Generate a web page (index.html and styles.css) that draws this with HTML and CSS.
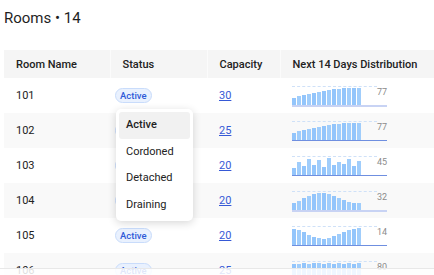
FILE: index.html
```html
<!doctype html>
<html lang="en">
	<head>
		<meta charset="UTF-8" />
		<title>Rooms</title>
		<link rel="stylesheet" href="styles.css">
	</head>
	<body>
		<h1 class="title">Rooms • 14</h1>

		<div class="table-wrap">
			<table class="rooms">
				<colgroup>
					<col class="c-name">
					<col class="c-status">
					<col class="c-cap">
					<col class="c-dist">
				</colgroup>
				<thead>
					<tr>
						<th>Room Name</th>
						<th>Status</th>
						<th>Capacity</th>
						<th>Next 14 Days Distribution</th>
					</tr>
				</thead>
				<tbody>
					<tr>
						<td>101</td>
						<td><span class="badge">Active</span></td>
						<td><a class="cap" href="#">30</a></td>
						<td>
							<div class="spark faint">
								<div class="bars">
									<i style="height:7px"></i><i style="height:9px"></i><i style="height:10px"></i><i style="height:11px"></i><i style="height:12px"></i><i style="height:13px"></i><i style="height:14px"></i><i style="height:15px"></i><i style="height:16px"></i><i style="height:16px"></i><i style="height:17px"></i><i style="height:17px"></i><i style="height:17px"></i><i style="height:17px"></i>
								</div>
								<span class="peak">77</span>
							</div>
						</td>
					</tr>
					<tr>
						<td>102</td>
						<td><span class="badge">Active</span></td>
						<td><a class="cap" href="#">25</a></td>
						<td>
							<div class="spark">
								<div class="bars">
									<i style="height:7px"></i><i style="height:9px"></i><i style="height:10px"></i><i style="height:11px"></i><i style="height:12px"></i><i style="height:13px"></i><i style="height:14px"></i><i style="height:15px"></i><i style="height:16px"></i><i style="height:16px"></i><i style="height:17px"></i><i style="height:17px"></i><i style="height:17px"></i><i style="height:17px"></i>
								</div>
								<span class="peak">77</span>
							</div>
						</td>
					</tr>
					<tr>
						<td>103</td>
						<td><span class="badge">Active</span></td>
						<td><a class="cap" href="#">20</a></td>
						<td>
							<div class="spark">
								<div class="bars">
									<i style="height:7px"></i><i style="height:13px"></i><i style="height:9px"></i><i style="height:16px"></i><i style="height:10px"></i><i style="height:15px"></i><i style="height:8px"></i><i style="height:17px"></i><i style="height:10px"></i><i style="height:13px"></i><i style="height:11px"></i><i style="height:16px"></i><i style="height:9px"></i><i style="height:14px"></i>
								</div>
								<span class="peak">45</span>
							</div>
						</td>
					</tr>
					<tr>
						<td>104</td>
						<td><span class="badge">Active</span></td>
						<td><a class="cap" href="#">20</a></td>
						<td>
							<div class="spark faint">
								<div class="bars">
									<i style="height:7px"></i><i style="height:9px"></i><i style="height:12px"></i><i style="height:14px"></i><i style="height:16px"></i><i style="height:17px"></i><i style="height:17px"></i><i style="height:16px"></i><i style="height:14px"></i><i style="height:12px"></i><i style="height:10px"></i><i style="height:8px"></i><i style="height:7px"></i><i style="height:7px"></i>
								</div>
								<span class="peak">32</span>
							</div>
						</td>
					</tr>
					<tr>
						<td>105</td>
						<td><span class="badge">Active</span></td>
						<td><a class="cap" href="#">20</a></td>
						<td>
							<div class="spark">
								<div class="bars">
									<i style="height:16px"></i><i style="height:15px"></i><i style="height:13px"></i><i style="height:10px"></i><i style="height:8px"></i><i style="height:7px"></i><i style="height:6px"></i><i style="height:7px"></i><i style="height:9px"></i><i style="height:11px"></i><i style="height:13px"></i><i style="height:15px"></i><i style="height:16px"></i><i style="height:17px"></i>
								</div>
								<span class="peak">14</span>
							</div>
						</td>
					</tr>
					<tr>
						<td>106</td>
						<td><span class="badge">Active</span></td>
						<td><a class="cap" href="#">25</a></td>
						<td>
							<div class="spark">
								<div class="bars">
									<i style="height:16px"></i><i style="height:16px"></i><i style="height:17px"></i><i style="height:16px"></i><i style="height:17px"></i><i style="height:17px"></i><i style="height:16px"></i><i style="height:17px"></i><i style="height:16px"></i><i style="height:17px"></i><i style="height:16px"></i><i style="height:17px"></i><i style="height:16px"></i><i style="height:17px"></i>
								</div>
								<span class="peak">80</span>
							</div>
						</td>
					</tr>
				</tbody>
			</table>

			<ul class="menu">
				<li class="selected">Active</li>
				<li>Cordoned</li>
				<li>Detached</li>
				<li>Draining</li>
			</ul>
		</div>

		<div class="footer"></div>
	</body>
</html>
```

FILE: styles.css
```css
body {
	font-family: Roboto, "Liberation Sans", sans-serif;
	margin: 0;
	padding: 0 0 0 4px;
	color: #222;
	background: #fff;
	overflow: hidden;
	height: 275px;
}

.title {
	font-size: 15px;
	font-weight: 400;
	margin: 0;
	padding-top: 9px;
	height: 50px;
	box-sizing: border-box;
	color: #1f1f1f;
}

.table-wrap {
	position: relative;
	width: 440px;
}

.rooms {
	border-collapse: collapse;
	table-layout: fixed;
	width: 440px;
	font-size: 11px;
}

.c-name { width: 106px; }
.c-status { width: 97px; }
.c-cap { width: 73px; }
.c-dist { width: 164px; }

.rooms th {
	background: #f5f5f5;
	font-weight: 500;
	text-align: left;
	height: 28px;
	padding: 0 0 0 12px;
	border-left: 1px solid #fbfbfb;
	color: #222;
	white-space: nowrap;
}

.rooms th:first-child {
	border-left: none;
}

.rooms td {
	height: 35px;
	padding: 0 0 0 12px;
	vertical-align: middle;
}

.rooms tbody tr:nth-child(even) td {
	background: #f9f9f9;
}

.badge {
	display: inline-block;
	font-size: 9.5px;
	font-weight: 500;
	color: #2f5bd8;
	background: #e9f1fe;
	border: 1px solid #c9dcfb;
	border-radius: 8px;
	padding: 1px 4px;
	line-height: 11px;
	margin-left: -7px;
}

.cap {
	color: #3659d6;
	text-decoration: underline;
}

.spark {
	display: flex;
	align-items: flex-start;
	width: 95px;
	height: 19px;
	border-bottom: 1px solid #6f8fe0;
	margin-top: 1px;
}

.spark.faint {
	border-bottom: 2px solid #c8d3f4;
}

.bars {
	display: flex;
	align-items: flex-end;
	gap: 1px;
	width: 85px;
	height: 18px;
	border-top: 1px dashed #cfe1f8;
}

.bars i {
	display: block;
	flex: 0 0 4px;
	background: #93c5fb;
}

.bars i:nth-child(even) {
	background: #a0cdfb;
}

.peak {
	font-size: 9px;
	color: #8c8c8c;
	margin-top: 1px;
	width: 10px;
	text-align: right;
}

.menu {
	position: absolute;
	left: 112px;
	top: 59px;
	width: 77px;
	margin: 0;
	padding: 3px;
	list-style: none;
	background: #fff;
	border-radius: 5px;
	box-shadow: 0 2px 8px rgba(0, 0, 0, 0.16);
	font-size: 11px;
	box-sizing: border-box;
}

.menu li {
	height: 26.5px;
	line-height: 26.5px;
	padding-left: 7px;
	border-radius: 3px;
	color: #222;
}

.menu li.selected {
	background: #f1f1f1;
	font-weight: 500;
}

.footer {
	position: fixed;
	left: 0;
	right: 0;
	top: 268px;
	bottom: 0;
	background: rgba(255, 255, 255, 0.85);
	border-top: 1px solid #e8e8e8;
}
```
